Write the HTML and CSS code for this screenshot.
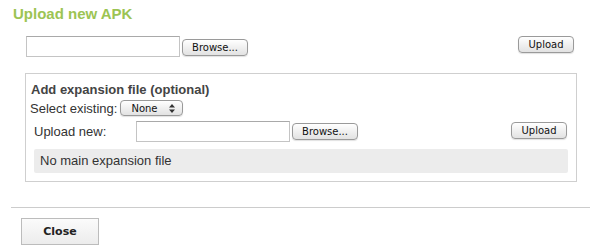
FILE: index.html
```html
<!DOCTYPE html>
<html lang="en">
<head>
    <meta charset="UTF-8">
    <meta name="viewport" content="width=device-width, initial-scale=1.0">
    <title>Upload new APK</title>
    <link rel="stylesheet" href="styles.css">
</head>
<body>

    <div class="dialog">
        <h2 class="title">Upload new APK</h2>

        <div class="apk-row">
            <input type="text" class="file-path">
            <button type="button" class="btn browse">Browse...</button>
            <button type="button" class="btn upload">Upload</button>
        </div>

        <div class="expansion">
            <h3>Add expansion file (optional)</h3>

            <div class="select-row">
                <label for="existing">Select existing:</label>
                <span class="select-wrap">
                    <select id="existing">
                        <option>None</option>
                    </select>
                    <svg class="arrows" width="6" height="9" viewBox="0 0 6 9">
                        <path d="M3 0 L6 3.5 L0 3.5 Z M3 9 L6 5.5 L0 5.5 Z" fill="#333"/>
                    </svg>
                </span>
            </div>

            <div class="upload-row">
                <label for="expfile">Upload new:</label>
                <input type="text" id="expfile" class="file-path">
                <button type="button" class="btn browse">Browse...</button>
                <button type="button" class="btn upload">Upload</button>
            </div>

            <div class="status">No main expansion file</div>
        </div>

        <div class="footer">
            <button type="button" class="close-btn">Close</button>
        </div>
    </div>

</body>
</html>
```

FILE: styles.css
```css
body { margin: 0; font-family: "Liberation Sans", Arial, sans-serif; font-size: 13px; color: #333; background: #fff; }

.title { margin: 0; padding: 5px 0 0 13px; font-size: 15px; line-height: 17px; font-weight: bold; color: #9cc453; }

.apk-row { display: flex; align-items: flex-start; margin-top: 14px; padding: 0 26px 0 26px; }
.file-path { width: 154px; height: 21px; box-sizing: border-box; border: 1px solid #c4c4c4; border-top-color: #a9a9a9; margin: 0; padding: 2px 4px; font-size: 12px; }

.btn { box-sizing: border-box; height: 17px; padding: 0; margin: 0; font-family: "DejaVu Sans", sans-serif; font-size: 10px; line-height: 15px; color: #111; border: 1px solid #9a9a9a; border-radius: 4px; background: linear-gradient(#ffffff, #f0f0f0 50%, #e2e2e2); box-shadow: 0 1px 1px rgba(0,0,0,0.12); cursor: pointer; }
.browse { width: 66px; margin-left: 2px; margin-top: 3px; }
.upload { width: 56px; margin-left: auto; }

.expansion { margin: 16px 23px 0 25px; border: 1px solid #cfcfcf; padding: 8px 0 8px 0; }
.expansion h3 { margin: 0; padding-left: 5px; font-size: 13px; line-height: 15px; color: #444; }

.select-row { display: flex; align-items: center; height: 18px; margin-top: 2px; padding-left: 4px; }
.select-wrap { position: relative; display: inline-block; margin-left: 3px; }
.select-wrap select { appearance: none; -webkit-appearance: none; width: 63px; height: 16px; box-sizing: border-box; margin: 0; padding: 0 0 0 10px; font-family: "DejaVu Sans", sans-serif; font-size: 10px; color: #111; border: 1px solid #9a9a9a; border-radius: 4px; background: linear-gradient(#ffffff, #f0f0f0 50%, #e2e2e2); box-shadow: 0 1px 1px rgba(0,0,0,0.12); }
.arrows { position: absolute; right: 8px; top: 4px; pointer-events: none; }

.upload-row { display: flex; align-items: flex-start; margin-top: 4px; padding: 0 9px 0 8px; }
.upload-row label { width: 102px; line-height: 21px; }
.upload-row .browse { margin-top: 2px; }
.upload-row .upload { margin-top: 1px; }

.status { margin: 7px 8px 0 8px; height: 24px; line-height: 24px; padding-left: 6px; background: #ececec; border-radius: 2px; color: #333; }

.footer { margin: 25px 10px 0 11px; border-top: 1px solid #cccccc; padding: 10px 0 0 10px; }
.close-btn { width: 78px; height: 27px; box-sizing: border-box; margin: 0; padding: 0; font-family: "DejaVu Sans", sans-serif; font-size: 11px; font-weight: bold; color: #222; border: 1px solid #bcbcbc; background: linear-gradient(#fbfbfb, #ececec); cursor: pointer; }
```
